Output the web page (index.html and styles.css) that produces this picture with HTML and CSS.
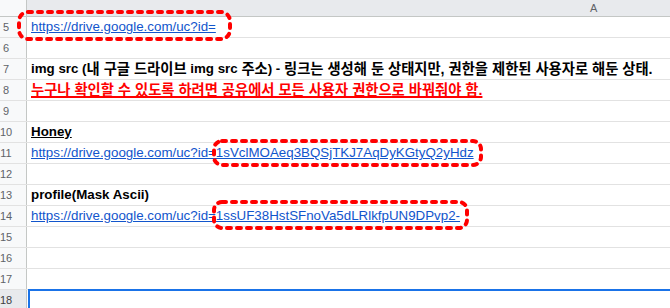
FILE: index.html
```html
<!DOCTYPE html>
<html lang="ko">
<head>
  <meta charset="UTF-8">
  <title>Sheet</title>
  <link rel="stylesheet" href="styles.css">
</head>
<body>

  <div class="sheet">
    <div class="row head">
      <div class="rowhead corner"></div>
      <div class="cell colhead">A</div>
    </div>

    <div class="row"><div class="rowhead"><span>5</span></div><div class="cell"><a class="link">https://drive.google.com/uc?id=</a></div></div>
    <div class="row"><div class="rowhead"><span>6</span></div><div class="cell"></div></div>
    <div class="row"><div class="rowhead"><span>7</span></div><div class="cell bold">img src (<span class="ko">내 구글 드라이브</span> img src <span class="ko">주소</span>) - <span class="ko">링크는 생성해 둔 상태지만, 권한을 제한된 사용자로 해둔 상태.</span></div></div>
    <div class="row"><div class="rowhead"><span>8</span></div><div class="cell bold warn"><span class="ko">누구나 확인할 수 있도록 하려면 공유에서 모든 사용자 권한으로 바꿔줘야 함.</span></div></div>
    <div class="row"><div class="rowhead"><span>9</span></div><div class="cell"></div></div>
    <div class="row"><div class="rowhead"><span>10</span></div><div class="cell bold"><u>Honey</u></div></div>
    <div class="row"><div class="rowhead"><span>11</span></div><div class="cell"><a class="link">https://drive.google.com/uc?id=1sVclMOAeq3BQSjTKJ7AqDyKGtyQ2yHdz</a></div></div>
    <div class="row"><div class="rowhead"><span>12</span></div><div class="cell"></div></div>
    <div class="row"><div class="rowhead"><span>13</span></div><div class="cell bold">profile(Mask Ascii)</div></div>
    <div class="row"><div class="rowhead"><span>14</span></div><div class="cell"><a class="link">https://drive.google.com/uc?id=1ssUF38HstSFnoVa5dLRlkfpUN9DPvp2-</a></div></div>
    <div class="row"><div class="rowhead"><span>15</span></div><div class="cell"></div></div>
    <div class="row"><div class="rowhead"><span>16</span></div><div class="cell"></div></div>
    <div class="row"><div class="rowhead"><span>17</span></div><div class="cell"></div></div>
    <div class="row"><div class="rowhead active"><span>18</span></div><div class="cell selected"></div></div>

    <!-- red marks drawn over the sheet -->
    <svg class="marks" width="670" height="308" viewBox="0 0 670 308">
      <rect x="19" y="12" width="211" height="27" rx="9"/>
      <rect x="214" y="141" width="267" height="24" rx="8"/>
      <rect x="214" y="202" width="253" height="26" rx="8"/>
    </svg>
  </div>

</body>
</html>
```

FILE: styles.css
```css
body {
  margin: 0;
  background: #fff;
  font-family: "Liberation Sans", "Noto Sans CJK KR", sans-serif;
  font-size: 13.33px;
  color: #000;
  overflow: hidden;
}
.sheet {
  position: relative;
  width: 670px;
  height: 308px;
  overflow: hidden;
}
.row {
  display: flex;
  height: 21px;
  box-sizing: border-box;
  border-bottom: 1px solid #e2e2e2;
}
.row.head {
  height: 17px;
  border-bottom: 1px solid #c4c7c5;
  background: #e8eaed;
}
.rowhead {
  width: 27px;
  flex: none;
  box-sizing: border-box;
  border-right: 1px solid #c4c7c5;
  background: #f8f9fa;
  color: #5f6368;
  font-size: 11px;
  display: flex;
  align-items: center;
}
.rowhead span {
  width: 12px;
  text-align: center;
}
.rowhead.corner {
  background: #f8f9fa;
}
.rowhead.active {
  background: #e8eaed;
  color: #3c4043;
}
.cell {
  flex: 1;
  position: relative;
  padding: 0 4px;
  display: flex;
  align-items: flex-end;
  padding-bottom: 2px;
  white-space: pre;
  line-height: 16px;
}
.colhead {
  padding: 0;
  align-items: center;
  justify-content: flex-start;
  padding-left: 563px;
  font-size: 11px;
  color: #5f6368;
  line-height: 14px;
}
.ko {
  font-size: 14.3px;
  line-height: 16px;
}
.bold {
  font-weight: bold;
}
.link {
  color: #1155cc;
  text-decoration: underline;
}
.warn {
  color: #ff0000;
  text-decoration: underline;
  text-decoration-thickness: 2px;
}
.selected::before {
  content: "";
  position: absolute;
  left: 1px;
  right: -4px;
  top: -1px;
  height: 40px;
  border-top: 2px solid #1a73e8;
  border-left: 2px solid #1a73e8;
}
.marks {
  position: absolute;
  left: 0;
  top: 0;
  pointer-events: none;
}
.marks rect {
  fill: none;
  stroke: #ff0000;
  stroke-width: 4;
  stroke-dasharray: 4 6;
  stroke-linecap: round;
}
```
